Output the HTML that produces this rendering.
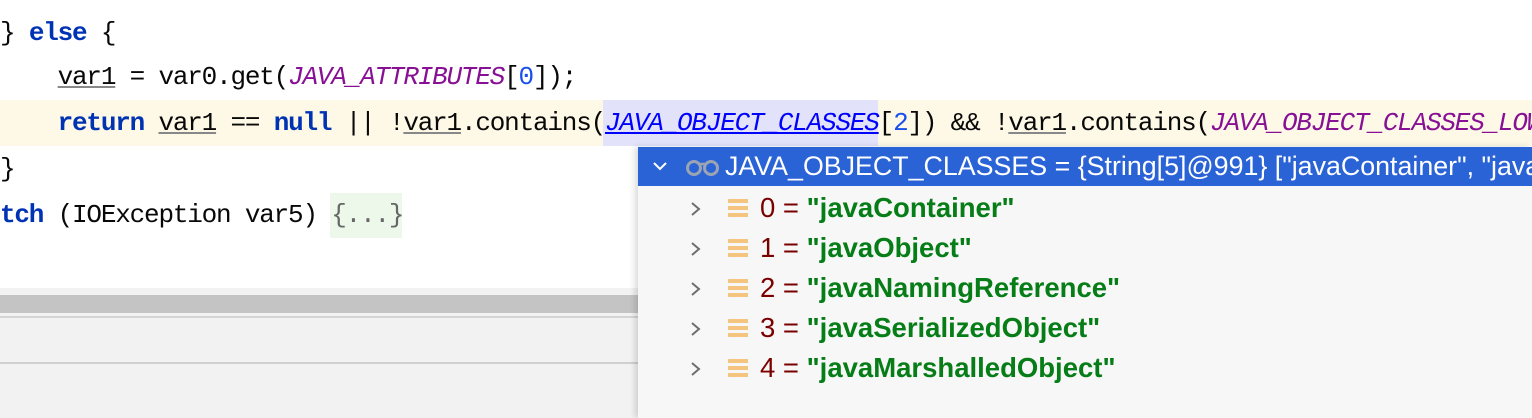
<!DOCTYPE html>
<html><head><style>
body{margin:0;width:1532px;height:418px;overflow:hidden;background:#fff;position:relative;font-family:"Liberation Mono",monospace;}
.code{position:absolute;left:0;font-size:26px;letter-spacing:-1.2px;white-space:pre;color:#080808;line-height:46px;height:46px}
.kw{color:#0033b3;font-weight:bold}
.u{text-decoration:underline;text-decoration-color:#888}
.cst{color:#871094;font-style:italic}
.num{color:#1750eb}
.pop{position:absolute;left:638px;top:147px;width:894px;height:271px;background:#f7f7f7;box-shadow:-3px 0 6px rgba(0,0,0,0.15);font-family:"Liberation Sans",sans-serif;font-size:27.5px;overflow:hidden}
.hdr{height:39px;background:#2a63d6;color:#fff;line-height:39px;white-space:nowrap;position:relative;font-size:26.8px}
.row{position:absolute;height:40px;line-height:40px;white-space:nowrap;left:0}
.ic{position:absolute;left:90px;top:11px;width:20px;height:18px;background:repeating-linear-gradient(#f4c57e 0 4px,transparent 4px 7px)}
.k{position:absolute;left:122px;color:#7a0000}
.s{color:#067d17;font-weight:bold}
</style></head><body>
<div class="code" style="top:10px">} <span class="kw">else</span> {</div>
<div class="code" style="top:54px">    <span class="u">var1</span> = var0.get(<span class="cst">JAVA_ATTRIBUTES</span>[<span class="num">0</span>]);</div>
<div style="position:absolute;left:0;top:100px;width:1532px;height:46px;background:#fdf9e6"></div>
<div style="position:absolute;left:603px;top:100px;width:275px;height:46px;background:#e2e2fb"></div>
<div class="code" style="top:100px">    <span class="kw">return</span> <span class="u">var1</span> == <span class="kw">null</span> || !<span class="u">var1</span>.contains(<span class="cst u" style="color:#0000ff;text-decoration-color:#0000ff">JAVA_OBJECT_CLASSES</span>[<span class="num">2</span>]) &amp;&amp; !<span class="u">var1</span>.contains(<span class="cst">JAVA_OBJECT_CLASSES_LOW</span></div>
<div class="code" style="top:146px">}</div>
<div style="position:absolute;left:330px;top:193px;width:72px;height:45px;background:#edf8ea"></div>
<div class="code" style="top:192px"><span class="kw">tch</span> (IOException var5) <span style="color:#666">{...}</span></div>
<div style="position:absolute;left:0;top:288px;width:640px;height:130px;background:#f2f2f2"></div>
<div style="position:absolute;left:0;top:295px;width:640px;height:18px;background:#c4c4c4"></div>
<div style="position:absolute;left:0;top:316px;width:640px;height:2px;background:#d4d4d4"></div>
<div style="position:absolute;left:0;top:362px;width:640px;height:2px;background:#d0d0d0"></div>
<div class="pop">
<div class="hdr"><svg style="position:absolute;left:14px;top:13px" width="16" height="12"><path d="M2 3 L8 9 L14 3" stroke="#fff" stroke-width="2" fill="none"/></svg><svg style="position:absolute;left:48px;top:11px" width="33" height="18"><circle cx="8" cy="10" r="6.5" stroke="#9aa4b4" stroke-width="3" fill="none"/><circle cx="25" cy="10" r="6.5" stroke="#9aa4b4" stroke-width="3" fill="none"/><path d="M14 6 L19 6" stroke="#9aa4b4" stroke-width="2.5"/></svg><span style="position:absolute;left:87px">JAVA_OBJECT_CLASSES = {String[5]@991} ["javaContainer", "javaNamingReference"]</span></div>
<div class="row" style="top:41px;width:894px"><svg style="position:absolute;left:52px;top:13px" width="12" height="16"><path d="M2 2 L9 8 L2 14" stroke="#6e6e6e" stroke-width="2" fill="none"/></svg><div class="ic"></div><span class="k">0 = <span class="s">"javaContainer"</span></span></div>
<div class="row" style="top:81px;width:894px"><svg style="position:absolute;left:52px;top:13px" width="12" height="16"><path d="M2 2 L9 8 L2 14" stroke="#6e6e6e" stroke-width="2" fill="none"/></svg><div class="ic"></div><span class="k">1 = <span class="s">"javaObject"</span></span></div>
<div class="row" style="top:121px;width:894px"><svg style="position:absolute;left:52px;top:13px" width="12" height="16"><path d="M2 2 L9 8 L2 14" stroke="#6e6e6e" stroke-width="2" fill="none"/></svg><div class="ic"></div><span class="k">2 = <span class="s">"javaNamingReference"</span></span></div>
<div class="row" style="top:161px;width:894px"><svg style="position:absolute;left:52px;top:13px" width="12" height="16"><path d="M2 2 L9 8 L2 14" stroke="#6e6e6e" stroke-width="2" fill="none"/></svg><div class="ic"></div><span class="k">3 = <span class="s">"javaSerializedObject"</span></span></div>
<div class="row" style="top:201px;width:894px"><svg style="position:absolute;left:52px;top:13px" width="12" height="16"><path d="M2 2 L9 8 L2 14" stroke="#6e6e6e" stroke-width="2" fill="none"/></svg><div class="ic"></div><span class="k">4 = <span class="s">"javaMarshalledObject"</span></span></div>
</div>
</body></html>
